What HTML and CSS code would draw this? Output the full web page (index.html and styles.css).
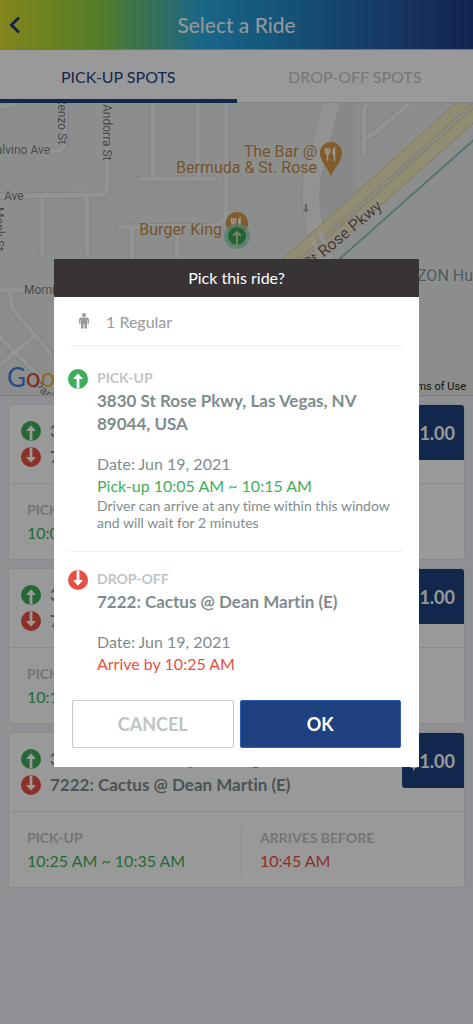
FILE: index.html
```html
<!DOCTYPE html>
<html lang="en">
<head>
    <meta charset="UTF-8">
    <meta name="viewport" content="width=device-width, initial-scale=1.0">
    <title>Select a Ride</title>
    <link rel="stylesheet" href="styles.css">
</head>
<body>
    <!-- Shared up / down icons -->
    <svg class="symbols" aria-hidden="true">
        <symbol id="iconUp" viewBox="0 0 20 20">
            <circle cx="10" cy="10" r="10" fill="#3fae5a"/>
            <path d="M8.6 19.6V10H5L10 4.2L15 10H11.4V19.6Z" fill="#fff"/>
        </symbol>
        <symbol id="iconDown" viewBox="0 0 20 20">
            <circle cx="10" cy="10" r="10" fill="#e94f41"/>
            <path d="M8.6 0.4V10H5L10 15.8L15 10H11.4V0.4Z" fill="#fff"/>
        </symbol>
    </svg>

    <header class="topbar">
        <button type="button" class="back" aria-label="Back">
            <svg width="12" height="18" viewBox="0 0 12 18"><path d="M10 1.5L2.5 9L10 16.5" fill="none" stroke="#1f417f" stroke-width="3"/></svg>
        </button>
        <h1>Select a Ride</h1>
    </header>

    <nav class="tabs">
        <button type="button" class="tab active">PICK-UP SPOTS</button>
        <button type="button" class="tab">DROP-OFF SPOTS</button>
    </nav>

    <!-- Map -->
    <div class="map">
        <svg viewBox="0 0 473 292" preserveAspectRatio="xMidYMid slice">
            <path class="block" d="M340 0H356V95L325 125L318 80Z"/>
            <g class="road-edge">
                <path d="M0 3H10Q13 3 16 -2M50 48H58Q65 46 65 38V0M107 0V84Q107 92 98 92L0 93M42 93V151M87 93V151"/>
                <path d="M153 0V76M198 0V76M141 76H214M226 0V110Q226 121 212 123L119 124M132 124V160M177 124V160"/>
                <path d="M367 -2Q364 5 364 14V50M364 34Q371 34 376 29L410 0"/>
                <path d="M0 187H24M10 187L12 205L50 250M0 234L42 276M33 234L0 262"/>
            </g>
            <g class="road">
                <path d="M0 3H10Q13 3 16 -2M50 48H58Q65 46 65 38V0M107 0V84Q107 92 98 92L0 93M42 93V151M87 93V151"/>
                <path d="M153 0V76M198 0V76M141 76H214M226 0V110Q226 121 212 123L119 124M132 124V160M177 124V160"/>
                <path d="M367 -2Q364 5 364 14V50M364 34Q371 34 376 29L410 0"/>
                <path d="M0 187H24M10 187L12 205L50 250M0 234L42 276M33 234L0 262"/>
            </g>
            <path class="avenue-edge" d="M333 -6L313 70Q309 90 312 110L317 140L330 165"/>
            <path class="avenue" d="M333 -6L313 70Q309 90 312 110L317 140L330 165"/>
            <path class="median" d="M480 -2L300 160"/>
            <path class="parkway-edge" d="M473 -8L281 165M483 4L302 165"/>
            <path class="parkway" d="M473 -8L281 165M483 4L302 165"/>
            <path class="lane" d="M312 135L322 157M319 129L330 153"/>
            <path class="trail" d="M476 35L335 160"/>
            <path d="M305 101H307V106H309L306 110L303 106H305Z" fill="#a3a7aa"/>

            <g class="street">
                <text transform="translate(58 -6) rotate(90)">Renzo St</text>
                <text transform="translate(103 1) rotate(90)">Andorra St</text>
                <text x="-12" y="51">Calvino Ave</text>
                <text x="4" y="97">Ave</text>
                <text transform="translate(-5 104) rotate(90)">Monk St</text>
                <text x="24" y="191">Morning Dew Ave</text>
                <text transform="translate(33 284) rotate(38)">Paris</text>
            </g>
            <text class="pkwy" text-anchor="end" transform="translate(383 105) rotate(-40)">St Rose Pkwy</text>
            <g class="place">
                <text x="317" y="54" text-anchor="end">The Bar @</text>
                <text x="317" y="70" text-anchor="end">Bermuda &amp; St. Rose</text>
                <text x="222" y="132" text-anchor="end">Burger King</text>
            </g>
            <text class="shop" x="382" y="178">AMAZON Hub</text>

            <!-- Restaurant pins -->
            <path d="M331 73C328 65 320 59 320 50A11 11 0 0 1 342 50C342 59 334 65 331 73Z" fill="#d99848"/>
            <path d="M325.500 45V49Q325.500 51 327.500 51V58M329.500 45V49Q329.500 51 327.500 51M327.500 45V51M334.500 58V45Q332.500 47 333.500 52H334.500" fill="none" stroke="#fff" stroke-width="1.500"/>
            <circle cx="237" cy="120" r="11" fill="#d99848"/>
            <path d="M231.500 115V118Q231.500 121 233.500 121V127M235.500 115V118Q235.500 121 233.500 121M233.500 115V121M240 127V115Q238 117 239 121H240" fill="none" stroke="#fff" stroke-width="1.500"/>
            <circle cx="237" cy="133" r="13" fill="#8ed3b0" fill-opacity="0.7"/>
            <circle cx="237" cy="133" r="9" fill="#3aa556"/>
            <path d="M237 142V130M233 133L237 129L241 133" fill="none" stroke="#cfd8a0" stroke-width="2"/>

            <text class="logo" x="7" y="284"><tspan fill="#4a7fe0">G</tspan><tspan fill="#e0483c">o</tspan><tspan fill="#eab53c">o</tspan><tspan fill="#4a7fe0">g</tspan><tspan fill="#3fae5a">l</tspan><tspan fill="#e0483c">e</tspan></text>
            <text class="terms" x="466" y="287" text-anchor="end">Terms of Use</text>
        </svg>
    </div>

    <!-- Ride list -->
    <main class="rides">
        <article class="ride">
            <div class="ride-head">
                <div class="stops">
                    <p><svg class="icon"><use href="#iconUp"/></svg><span>3830 St Rose Pkwy, Las Vegas, NV 89044, USA</span></p>
                    <p><svg class="icon"><use href="#iconDown"/></svg><span>7222: Cactus @ Dean Martin (E)</span></p>
                </div>
                <button type="button" class="price">$1.00</button>
            </div>
            <div class="times">
                <div class="time"><h3>PICK-UP</h3><p class="green">10:05 AM ~ 10:15 AM</p></div>
                <div class="time"><h3>ARRIVES BEFORE</h3><p class="red">10:25 AM</p></div>
            </div>
        </article>
        <article class="ride">
            <div class="ride-head">
                <div class="stops">
                    <p><svg class="icon"><use href="#iconUp"/></svg><span>3830 St Rose Pkwy, Las Vegas, NV 89044, USA</span></p>
                    <p><svg class="icon"><use href="#iconDown"/></svg><span>7222: Cactus @ Dean Martin (E)</span></p>
                </div>
                <button type="button" class="price">$1.00</button>
            </div>
            <div class="times">
                <div class="time"><h3>PICK-UP</h3><p class="green">10:15 AM ~ 10:25 AM</p></div>
                <div class="time"><h3>ARRIVES BEFORE</h3><p class="red">10:35 AM</p></div>
            </div>
        </article>
        <article class="ride">
            <div class="ride-head">
                <div class="stops">
                    <p><svg class="icon"><use href="#iconUp"/></svg><span>3830 St Rose Pkwy, Las Vegas, NV 89044, USA</span></p>
                    <p><svg class="icon"><use href="#iconDown"/></svg><span>7222: Cactus @ Dean Martin (E)</span></p>
                </div>
                <button type="button" class="price">$1.00</button>
            </div>
            <div class="times">
                <div class="time"><h3>PICK-UP</h3><p class="green">10:25 AM ~ 10:35 AM</p></div>
                <div class="time"><h3>ARRIVES BEFORE</h3><p class="red">10:45 AM</p></div>
            </div>
        </article>
    </main>

    <!-- Confirm dialog -->
    <div class="overlay">
        <div class="modal" role="dialog" aria-labelledby="modalTitle">
            <h2 id="modalTitle">Pick this ride?</h2>
            <div class="modal-body">
                <div class="riders">
                    <svg width="12" height="16" viewBox="0 0 12 16" fill="#999">
                        <circle cx="6" cy="2" r="2"/>
                        <path d="M3 4.500H9Q11 4.500 11 6.500V10.500H9.500V7H9V15.500H6.500V11H5.500V15.500H3V7H2.500V10.500H1V6.500Q1 4.500 3 4.500Z"/>
                    </svg>
                    <span>1 Regular</span>
                </div>
                <section class="leg">
                    <svg class="icon"><use href="#iconUp"/></svg>
                    <div>
                        <h3>PICK-UP</h3>
                        <p class="address">3830 St Rose Pkwy, Las Vegas, NV 89044, USA</p>
                        <p>Date: Jun 19, 2021</p>
                        <p class="green">Pick-up 10:05 AM ~ 10:15 AM</p>
                        <p class="note">Driver can arrive at any time within this window and will wait for 2 minutes</p>
                    </div>
                </section>
                <section class="leg">
                    <svg class="icon"><use href="#iconDown"/></svg>
                    <div>
                        <h3>DROP-OFF</h3>
                        <p class="address">7222: Cactus @ Dean Martin (E)</p>
                        <p>Date: Jun 19, 2021</p>
                        <p class="red">Arrive by 10:25 AM</p>
                    </div>
                </section>
                <div class="actions">
                    <button type="button" class="cancel">CANCEL</button>
                    <button type="button" class="ok">OK</button>
                </div>
            </div>
        </div>
    </div>
</body>
</html>
```
FILE: styles.css
```css
/* General Reset */
* {
    margin: 0;
    padding: 0;
    box-sizing: border-box;
}

body {
    font-family: Lato, "Liberation Sans", sans-serif;
    font-size: 16px;
    font-variant-ligatures: none;
    color: #7f8c8d;
    background-color: #eef1f5;
    min-height: 100vh;
}

button {
    font-family: inherit;
    border: none;
    cursor: pointer;
}

.symbols {
    display: none;
}

.icon {
    width: 20px;
    height: 20px;
    flex-shrink: 0;
}

.green {
    color: #3fae5a;
}

.red {
    color: #e94f41;
}

/* Top bar */
.topbar {
    display: grid;
    grid-template-columns: 40px 1fr 40px;
    align-items: center;
    height: 50px;
    background: linear-gradient(to right, #dbe02f, #8cd043 21%, #2aaae4 43%, #238fcb 58%, #2658a2 85%, #203c84);
    border-bottom: 1px solid #b0bcc8;
}

.topbar h1 {
    font-size: 21px;
    font-weight: 400;
    color: #fff;
    text-align: center;
}

.back {
    height: 40px;
    padding-left: 9px;
    text-align: left;
    background: none;
}

.back svg {
    display: block;
}

/* Tabs */
.tabs {
    display: flex;
    height: 53px;
    background-color: #fff;
    border-bottom: 1px solid #d5d9dc;
}

.tab {
    flex: 1;
    height: 53px;
    padding-top: 4px;
    font-size: 16px;
    color: #c4c6c7;
    background: none;
    border-bottom: 4px solid transparent;
}

.tab.active {
    color: #1f417f;
    border-bottom-color: #1f417f;
}

/* Map */
.map {
    height: 293px;
    background-color: #e8edeb;
    border-bottom: 1px solid #cfd3d6;
}

.map svg {
    display: block;
    width: 100%;
    height: 100%;
    font-family: Roboto, sans-serif;
}

.block {
    fill: #e2e3e3;
}

.road-edge,
.road {
    fill: none;
    stroke: #d9dcdc;
    stroke-width: 7px;
    stroke-linecap: round;
}

.road {
    stroke: #f5f6f6;
    stroke-width: 5px;
}

.avenue-edge,
.avenue {
    fill: none;
    stroke: #d9dcdc;
    stroke-width: 19px;
}

.avenue {
    stroke: #f3f4f4;
    stroke-width: 17px;
}

.median {
    stroke: #e4e6e2;
    stroke-width: 20px;
}

.parkway-edge,
.parkway {
    stroke: #e2cf9c;
    stroke-width: 12px;
}

.parkway {
    stroke: #f2ebbf;
    stroke-width: 10px;
}

.lane {
    stroke: #f3f4f4;
    stroke-width: 4px;
}

.trail {
    stroke: #8fc4bb;
    stroke-width: 2px;
}

.street {
    font-size: 12px;
    fill: #777b7d;
}

.street text,
.place text,
.shop,
.pkwy {
    paint-order: stroke;
    stroke: #f0f3f2;
    stroke-width: 2px;
}

.pkwy {
    font-size: 16px;
    fill: #7d6250;
}

.place {
    font-size: 16px;
    fill: #c58a4c;
}

.shop {
    font-size: 16px;
    fill: #84939a;
}

.logo {
    font-family: Lato, sans-serif;
    font-size: 26px;
}

.terms {
    font-size: 11px;
    fill: #222;
}

/* Ride cards */
.rides {
    display: flex;
    flex-direction: column;
    gap: 10px;
    padding: 9px;
}

.ride {
    background-color: #fff;
    border-radius: 3px;
    box-shadow: 0 0 2px rgba(0, 0, 0, 0.2);
}

.ride-head {
    display: flex;
    align-items: flex-start;
    border-bottom: 1px solid #e3e7ea;
}

.stops {
    flex: 1;
    min-width: 0;
    padding: 13px 12px;
}

.stops p {
    display: flex;
    align-items: center;
    gap: 9px;
    font-size: 17px;
    font-weight: 700;
    line-height: 26px;
}

.stops span {
    overflow: hidden;
    white-space: nowrap;
    text-overflow: ellipsis;
}

.price {
    width: 62px;
    height: 55px;
    padding-right: 9px;
    font-size: 18px;
    font-weight: 700;
    color: #fff;
    text-align: right;
    background-color: #1f417f;
    border-radius: 0 3px 0 3px;
}

.times {
    display: grid;
    grid-template-columns: 51% 1fr;
    padding: 13px 0;
}

.time {
    padding: 2px 18px 1px;
}

.time + .time {
    border-left: 1px solid #e3e7ea;
}

.time h3 {
    font-size: 14px;
    line-height: 22px;
    color: #c0c4c5;
}

.time p {
    line-height: 24px;
}

/* Confirm dialog */
.overlay {
    position: fixed;
    inset: 0;
    display: flex;
    align-items: center;
    justify-content: center;
    padding: 2px 54px 0;
    background-color: rgba(0, 0, 0, 0.4);
}

.modal {
    width: 100%;
    max-width: 480px;
    background-color: #fff;
}

.modal h2 {
    font-size: 16px;
    font-weight: 400;
    line-height: 38px;
    color: #fff;
    text-align: center;
    background-color: #383435;
}

.modal-body {
    padding: 0 16px 19px;
}

.riders {
    display: flex;
    align-items: center;
    gap: 16px;
    height: 49px;
    padding-left: 8px;
    color: #999;
    border-bottom: 1px solid #eceff1;
}

.leg {
    display: flex;
    gap: 9px;
    padding: 21px 0 20px;
    line-height: 22px;
    border-bottom: 1px solid #eceff1;
}

.leg .icon {
    margin: 2px 0 0 -2px;
}

.leg + .leg {
    padding: 16px 0 25px;
    border-bottom: none;
}

.leg h3 {
    font-size: 14px;
    color: #c0c4c5;
}

.address {
    font-size: 17px;
    font-weight: 700;
    line-height: 23px;
    margin-bottom: 18px;
}

.note {
    font-size: 14px;
    line-height: 17px;
}

.actions {
    display: flex;
    gap: 6px;
    padding: 0 2px;
}

.actions button {
    flex: 1;
    height: 48px;
    font-size: 18px;
    font-weight: 700;
    border-radius: 2px;
}

.cancel {
    color: #c0c4c5;
    background-color: #fff;
    border: 1px solid #c6cacb;
}

.ok {
    color: #fff;
    background-color: #1f417f;
    border: 1px solid #2f5cb5;
}
```
